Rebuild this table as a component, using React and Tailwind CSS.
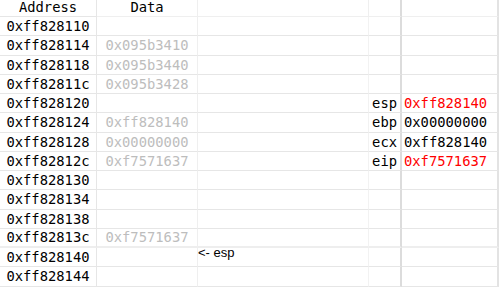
import React from 'react';

const rows = [
  { addr: '0xff828110' },
  { addr: '0xff828114', data: '0x095b3410' },
  { addr: '0xff828118', data: '0x095b3440' },
  { addr: '0xff82811c', data: '0x095b3428' },
  { addr: '0xff828120', reg: 'esp', val: '0xff828140', red: true },
  { addr: '0xff828124', data: '0xff828140', reg: 'ebp', val: '0x00000000' },
  { addr: '0xff828128', data: '0x00000000', reg: 'ecx', val: '0xff828140' },
  { addr: '0xff82812c', data: '0xf7571637', reg: 'eip', val: '0xf7571637', red: true },
  { addr: '0xff828130' },
  { addr: '0xff828134' },
  { addr: '0xff828138' },
  { addr: '0xff82813c', data: '0xf7571637', thick: true },
  { addr: '0xff828140', note: '<- esp' },
  { addr: '0xff828144' },
];

const mono = { fontFamily: '"DejaVu Sans Mono", monospace' };

export default function App() {
  return (
    <div className="w-[499px] h-[288px] overflow-hidden bg-white text-[13.8px] text-black" style={mono}>
      <div className="grid grid-cols-[97px_101px_171px_33px_97px] h-[17px]">
        <div className="border-r border-b border-[#e6e6e6] flex items-center justify-center leading-none">Address</div>
        <div className="border-r border-b border-[#efefef] flex items-center justify-center leading-none">Data</div>
        <div className="border-r border-b border-[#efefef]" />
        <div className="border-r-2 border-b border-r-[#dcdcdc] border-b-[#efefef]" />
        <div className="border-r-2 border-b border-r-[#e3e3e3] border-b-[#efefef]" />
      </div>
      {rows.map(r => (
        <div key={r.addr} className="grid grid-cols-[97px_101px_171px_33px_97px] h-[19.25px]">
          <div className={`border-r border-[#e6e6e6] flex items-center justify-center leading-none pt-[2px] ${r.thick ? 'border-b-2 border-b-[#eeeeee]' : 'border-b'}`}>{r.addr}</div>
          <div className={`border-r border-r-[#efefef] flex items-center justify-center leading-none pt-[2px] text-[#bdbdbd] ${r.thick ? 'border-b-2 border-b-[#eeeeee]' : 'border-b border-b-[#e6e6e6]'}`}>{r.data}</div>
          <div className={`border-r border-r-[#f2f2f2] relative ${r.thick ? 'border-b-2 border-b-[#eeeeee]' : 'border-b border-b-[#e6e6e6]'}`}>
            {r.note && (
              <span className="absolute left-0 top-[-2px] text-[13px] leading-none" style={{ fontFamily: '"Liberation Sans", Arial, sans-serif' }}>{r.note}</span>
            )}
          </div>
          <div className={`border-r-2 border-r-[#dcdcdc] flex items-center justify-end pr-[3px] leading-none pt-[2px] ${r.thick ? 'border-b-2 border-b-[#eeeeee]' : 'border-b border-b-[#e6e6e6]'}`}>{r.reg}</div>
          <div className={`border-r-2 border-r-[#e3e3e3] flex items-center pl-[2px] leading-none pt-[2px] ${r.red ? 'text-[#ff0000]' : ''} ${r.thick ? 'border-b-2 border-b-[#eeeeee]' : 'border-b border-b-[#e6e6e6]'}`}>{r.val}</div>
        </div>
      ))}
    </div>
  );
}
